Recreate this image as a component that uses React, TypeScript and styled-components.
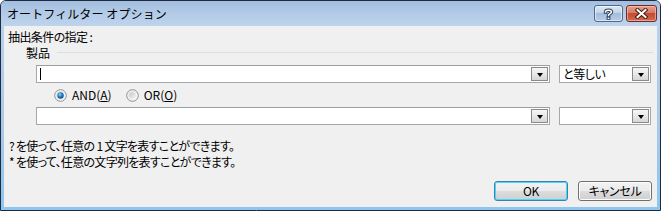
import React from "react";
import styled, { createGlobalStyle } from "styled-components";

const GlobalStyle = createGlobalStyle`
  html, body { margin: 0; padding: 0; background: #ffffff; }
  body { font-family: "Noto Sans CJK JP", "Noto Sans", sans-serif; font-size: 12px; color: #000; }
  * { box-sizing: border-box; }
`;

const Window = styled.div`
  width: 661px;
  height: 211px;
  border: 1px solid #1e2c3e;
  border-radius: 6px 6px 0 0;
  background: linear-gradient(#bcd3ec 0%, #a9c8ea 60%, #8cc6ee 100%);
  display: flex;
  flex-direction: column;
  overflow: hidden;
`;

const TitleBar = styled.div`
  height: 25px;
  flex: none;
  display: flex;
  justify-content: space-between;
  align-items: flex-start;
  padding: 4px 3px 0 6px;
  background: linear-gradient(#a3bedf 0%, #b3cbe7 50%, #bed4ed 100%);
`;

const TitleText = styled.div`
  font-size: 12px;
  line-height: 18px;
  letter-spacing: 0.1px;
  color: #000;
`;

const CaptionButtons = styled.div`
  display: flex;
  gap: 3px;
`;

const CaptionButton = styled.div<{ $variant: "help" | "close" }>`
  width: ${(p) => (p.$variant === "close" ? 31 : 29)}px;
  height: 17px;
  border-radius: 3px;
  display: flex;
  align-items: center;
  justify-content: center;
  border: 1px solid ${(p) => (p.$variant === "close" ? "#6e2c22" : "#51698a")};
  box-shadow: inset 0 0 0 1px ${(p) => (p.$variant === "close" ? "rgba(255,200,190,0.6)" : "rgba(255,255,255,0.55)")};
  background: ${(p) =>
    p.$variant === "close"
      ? "linear-gradient(#e7a090 0%, #d67a66 45%, #c44a32 50%, #cf6a52 100%)"
      : "linear-gradient(#dce7f4 0%, #c2d4ea 45%, #a3bddd 50%, #b7cde8 100%)"};
`;

const Client = styled.div`
  flex: 1;
  margin: 0 3px 3px 3px;
  background: #f0f0f0;
  display: flex;
  flex-direction: column;
  padding-left: 4px;
  font-feature-settings: "palt";
`;

const SectionLabel = styled.div`
  margin-top: 4px;
  height: 14px;
  line-height: 14px;
  letter-spacing: -0.6px;
  white-space: pre;
`;

const GroupHeader = styled.div`
  margin-top: 2px;
  height: 14px;
  display: flex;
  align-items: center;
  padding-left: 18px;
  padding-right: 4px;
  line-height: 14px;
`;

const GroupLine = styled.div`
  flex: 1;
  height: 1px;
  margin-left: 7px;
  margin-top: -2px;
  background: #d5dfe5;
`;

const ComboRow = styled.div<{ $top: number }>`
  margin-top: ${(p) => p.$top}px;
  display: flex;
  gap: 9px;
  padding-left: 28px;
`;

const Combo = styled.div<{ $width: number }>`
  width: ${(p) => p.$width}px;
  height: 18px;
  border: 1px solid #a5a7ad;
  border-top-color: #9c9ea4;
  background: #ffffff;
  display: flex;
  align-items: center;
  padding: 0 1px 0 3px;
`;

const ComboText = styled.div`
  flex: 1;
  line-height: 14px;
  letter-spacing: -0.4px;
  white-space: pre;
  display: flex;
  align-items: center;
`;

const Caret = styled.span`
  display: inline-block;
  width: 1px;
  height: 12px;
  background: #000;
`;

const DropButton = styled.div`
  width: 17px;
  height: 14px;
  border: 1px solid #8a8a8a;
  background: linear-gradient(#f6f6f6 0%, #e8e8e8 50%, #d6d6d6 100%);
  display: flex;
  align-items: center;
  justify-content: center;
`;

const Arrow = styled.div`
  width: 0;
  height: 0;
  margin-top: 1px;
  border-left: 3.5px solid transparent;
  border-right: 3.5px solid transparent;
  border-top: 4px solid #000;
`;

const RadioRow = styled.div`
  margin-top: 4px;
  height: 16px;
  display: flex;
  align-items: center;
  padding-left: 46px;
  gap: 14px;
`;

const RadioItem = styled.label`
  display: flex;
  align-items: center;
  gap: 5px;
  line-height: 14px;
`;

const Hints = styled.div`
  margin-top: 13px;
  line-height: 16px;
  padding-left: 1px;
  letter-spacing: -0.7px;
  white-space: pre;
`;

const ButtonRow = styled.div`
  margin-top: 11px;
  display: flex;
  justify-content: flex-end;
  gap: 10px;
  padding-right: 5px;
`;

const PushButton = styled.div<{ $default?: boolean }>`
  width: 74px;
  height: 20px;
  border-radius: 3px;
  border: 1px solid ${(p) => (p.$default ? "#3c7fb1" : "#707070")};
  box-shadow: inset 0 0 0 1px ${(p) => (p.$default ? "#48d8fb" : "#fcfcfc")};
  background: linear-gradient(#f2f2f2 0%, #ebebeb 50%, #dddddd 51%, #cfcfcf 100%);
  display: flex;
  align-items: center;
  justify-content: center;
  line-height: 14px;
  letter-spacing: -0.3px;
`;

const Radio = ({ checked }: { checked: boolean }) => (
  <svg width="13" height="13" viewBox="0 0 13 13">
    <defs>
      <linearGradient id={checked ? "rbg1" : "rbg2"} x1="0" y1="0" x2="1" y2="1">
        <stop offset="0" stopColor="#d6d6d6" />
        <stop offset="1" stopColor="#fdfdfd" />
      </linearGradient>
      <radialGradient id="rdot" cx="0.4" cy="0.35" r="0.7">
        <stop offset="0" stopColor="#8fd8ff" />
        <stop offset="0.45" stopColor="#2a88d0" />
        <stop offset="1" stopColor="#0b3f7a" />
      </radialGradient>
      <linearGradient id="rgray" x1="0" y1="0" x2="1" y2="1">
        <stop offset="0" stopColor="#c9c9c9" />
        <stop offset="1" stopColor="#f2f2f2" />
      </linearGradient>
    </defs>
    <circle cx="6.5" cy="6.5" r="5.8" fill="#f4f4f4" stroke="#8e8f8f" strokeWidth="1" />
    <circle cx="6.5" cy="6.5" r="4.2" fill={`url(#${checked ? "rbg1" : "rbg2"})`} />
    <circle cx="6.5" cy="6.5" r="3.2" fill={checked ? "url(#rdot)" : "url(#rgray)"} />
  </svg>
);

const HelpIcon = () => (
  <svg width="11" height="12" viewBox="0 0 11 12">
    <path d="M2.5 4 C2.5 1.5 8.5 1.5 8.5 4 C8.5 5.8 5.5 5.6 5.5 7.6" fill="none" stroke="#2d3f5a" strokeWidth="3.4" strokeLinecap="square" />
    <rect x="3.6" y="8.7" width="3.8" height="3.1" fill="#2d3f5a" />
    <path d="M2.5 4 C2.5 1.5 8.5 1.5 8.5 4 C8.5 5.8 5.5 5.6 5.5 7.6" fill="none" stroke="#ffffff" strokeWidth="1.5" strokeLinecap="square" />
    <rect x="4.6" y="9.6" width="1.8" height="1.4" fill="#ffffff" />
  </svg>
);

const CloseIcon = () => (
  <svg width="13" height="11" viewBox="0 0 13 11">
    <path d="M2.5 2 L10.5 9 M10.5 2 L2.5 9" stroke="#4a1a12" strokeWidth="4" strokeLinecap="square" />
    <path d="M2.5 2 L10.5 9 M10.5 2 L2.5 9" stroke="#ffffff" strokeWidth="2" strokeLinecap="square" />
  </svg>
);

export default function App() {
  return (
    <>
      <GlobalStyle />
      <Window>
        <TitleBar>
          <TitleText>オートフィルター オプション</TitleText>
          <CaptionButtons>
            <CaptionButton $variant="help">
              <HelpIcon />
            </CaptionButton>
            <CaptionButton $variant="close">
              <CloseIcon />
            </CaptionButton>
          </CaptionButtons>
        </TitleBar>
        <Client>
          <SectionLabel>抽出条件の指定 :</SectionLabel>
          <GroupHeader>
            製品
            <GroupLine />
          </GroupHeader>
          <ComboRow $top={5}>
            <Combo $width={514}>
              <ComboText>
                <Caret />
              </ComboText>
              <DropButton>
                <Arrow />
              </DropButton>
            </Combo>
            <Combo $width={92}>
              <ComboText>と等しい</ComboText>
              <DropButton>
                <Arrow />
              </DropButton>
            </Combo>
          </ComboRow>
          <RadioRow>
            <RadioItem>
              <Radio checked />
              <span>
                AND(<u>A</u>)
              </span>
            </RadioItem>
            <RadioItem>
              <Radio checked={false} />
              <span>
                OR(<u>O</u>)
              </span>
            </RadioItem>
          </RadioRow>
          <ComboRow $top={4}>
            <Combo $width={514}>
              <ComboText />
              <DropButton>
                <Arrow />
              </DropButton>
            </Combo>
            <Combo $width={92}>
              <ComboText />
              <DropButton>
                <Arrow />
              </DropButton>
            </Combo>
          </ComboRow>
          <Hints>
            {"? を使って、任意の 1 文字を表すことができます。\n* を使って、任意の文字列を表すことができます。"}
          </Hints>
          <ButtonRow>
            <PushButton $default>OK</PushButton>
            <PushButton>キャンセル</PushButton>
          </ButtonRow>
        </Client>
      </Window>
    </>
  );
}
